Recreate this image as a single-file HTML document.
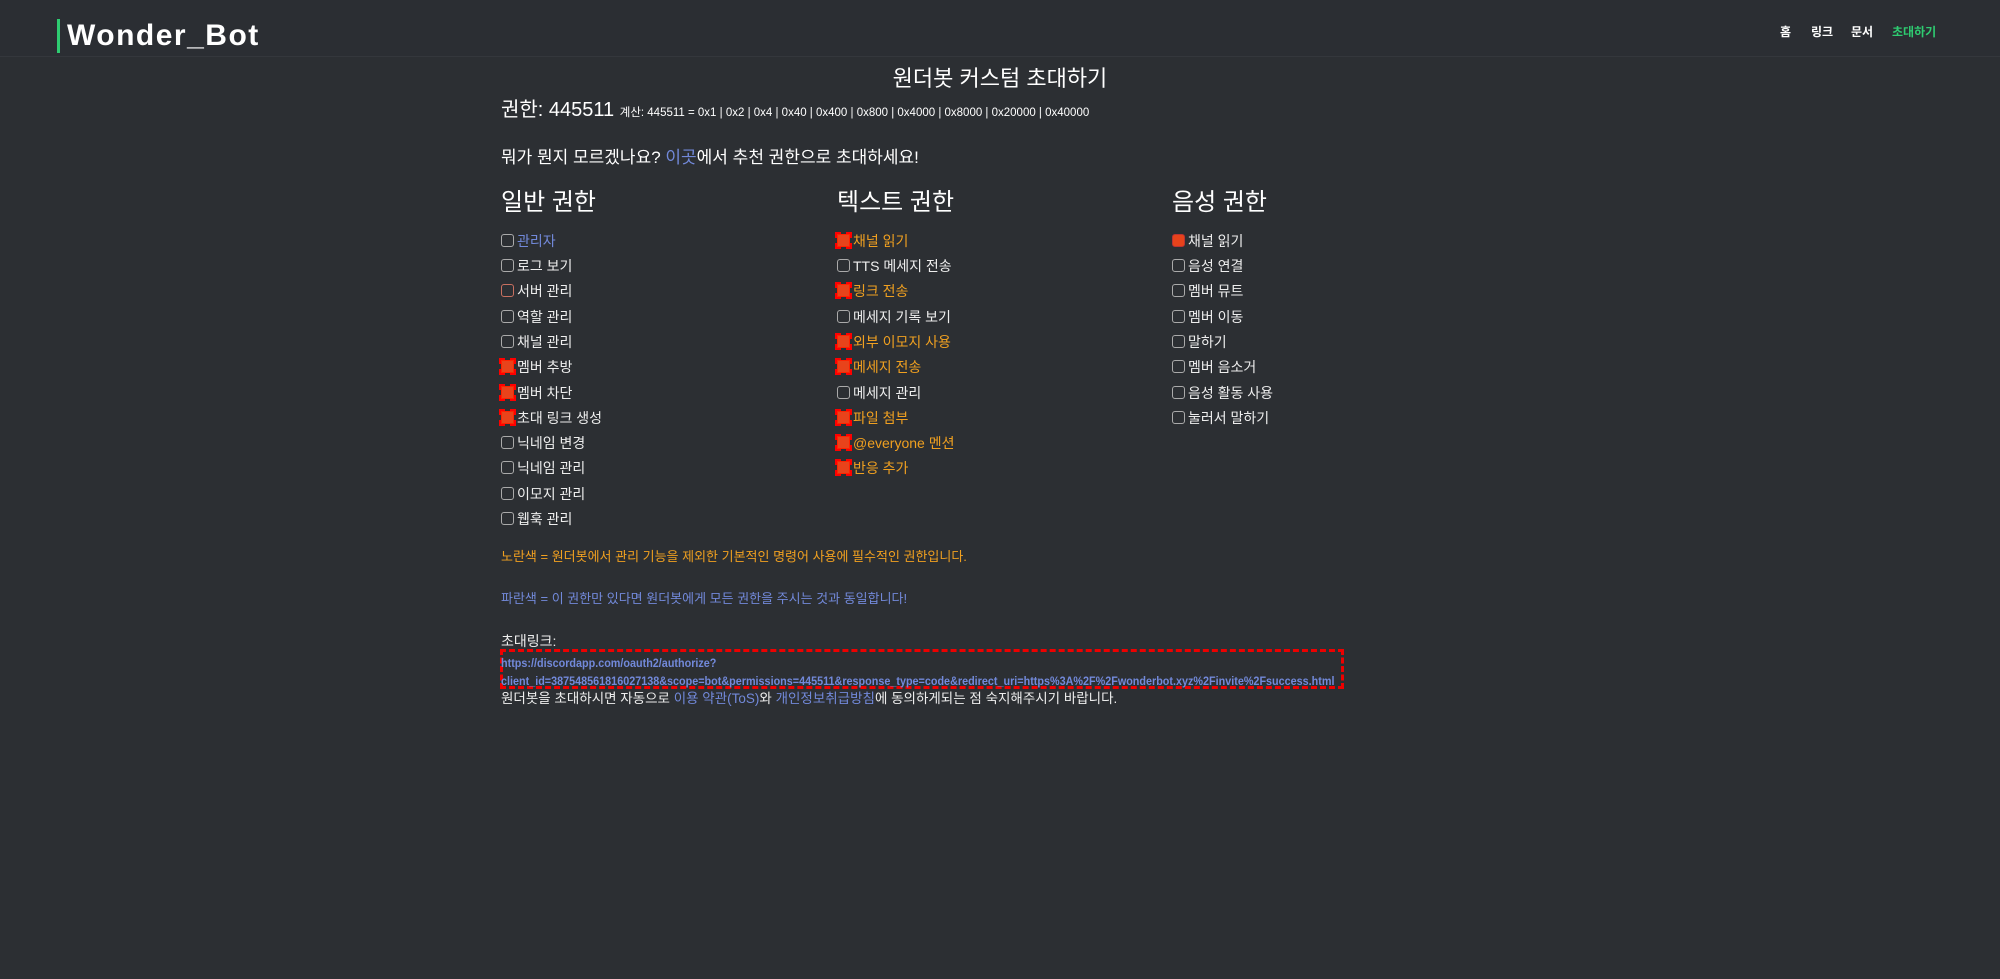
<!DOCTYPE html>
<html><head><meta charset="utf-8"><style>
*{margin:0;padding:0;box-sizing:border-box}
body{width:2000px;height:979px;background:#2c2f33;font-family:"Liberation Sans","Noto Sans CJK KR",sans-serif;color:#fff;position:relative;overflow:hidden}
.hdr{position:absolute;left:0;top:0;width:2000px;height:57px;background:#2b2e33;border-bottom:1px solid #34373c}
.bar{position:absolute;left:57px;top:19px;width:3px;height:34px;background:#2ecc71}
.logo{position:absolute;left:67px;top:18px;font-size:30px;font-weight:bold;letter-spacing:1.5px;line-height:36px}
.nav{position:absolute;top:25px;font-size:12px;font-weight:bold;line-height:14px}
.t{position:absolute;white-space:nowrap}
.cb{position:absolute;width:13px;height:13px;border:1.5px solid #aaa;border-radius:3px}
.on{background:#e8431b;border-color:#ff2200;border-radius:0;outline:2px dashed #f00;outline-offset:0}
.on2{background:#e8431b;border-color:#b33}
.it{position:absolute;font-size:14px;line-height:16px;white-space:nowrap;color:#eee}
.b{color:#7289da !important}.y{color:#f0a020 !important}
</style></head><body>
<div class="hdr"></div>
<div class="bar"></div>
<div class="logo">Wonder_Bot</div>
<div class="nav" style="left:1780px">홈</div>
<div class="nav" style="left:1811px">링크</div>
<div class="nav" style="left:1851px">문서</div>
<div class="nav" style="left:1892px;color:#2ecc71">초대하기</div>

<div class="t" style="left:0;width:2000px;text-align:center;top:66px;font-size:22px;line-height:26px">원더봇 커스텀 초대하기</div>
<div class="t" style="left:501px;top:97px;font-size:20px;line-height:26px">권한: 445511 <span style="font-size:11.5px">계산: 445511 = 0x1 | 0x2 | 0x4 | 0x40 | 0x400 | 0x800 | 0x4000 | 0x8000 | 0x20000 | 0x40000</span></div>
<div class="t" style="left:501px;top:148px;font-size:17px;line-height:20px">뭐가 뭔지 모르겠나요? <span class="b">이곳</span>에서 추천 권한으로 초대하세요!</div>
<div class="t" style="left:501px;top:189px;font-size:24px;line-height:28px">일반 권한</div>
<div class="t" style="left:837px;top:189px;font-size:24px;line-height:28px">텍스트 권한</div>
<div class="t" style="left:1172px;top:189px;font-size:24px;line-height:28px">음성 권한</div>

<div class="cb" style="left:501px;top:234px"></div><div class="it b" style="left:517px;top:233px">관리자</div>
<div class="cb" style="left:501px;top:259px"></div><div class="it" style="left:517px;top:258px">로그 보기</div>
<div class="cb" style="left:501px;top:284px;border-color:#c87060"></div><div class="it" style="left:517px;top:283px">서버 관리</div>
<div class="cb" style="left:501px;top:310px"></div><div class="it" style="left:517px;top:309px">역할 관리</div>
<div class="cb" style="left:501px;top:335px"></div><div class="it" style="left:517px;top:334px">채널 관리</div>
<div class="cb on" style="left:501px;top:360px"></div><div class="it" style="left:517px;top:359px">멤버 추방</div>
<div class="cb on" style="left:501px;top:386px"></div><div class="it" style="left:517px;top:385px">멤버 차단</div>
<div class="cb on" style="left:501px;top:411px"></div><div class="it" style="left:517px;top:410px">초대 링크 생성</div>
<div class="cb" style="left:501px;top:436px"></div><div class="it" style="left:517px;top:435px">닉네임 변경</div>
<div class="cb" style="left:501px;top:461px"></div><div class="it" style="left:517px;top:460px">닉네임 관리</div>
<div class="cb" style="left:501px;top:487px"></div><div class="it" style="left:517px;top:486px">이모지 관리</div>
<div class="cb" style="left:501px;top:512px"></div><div class="it" style="left:517px;top:511px">웹훅 관리</div>

<div class="cb on" style="left:837px;top:234px"></div><div class="it y" style="left:853px;top:233px">채널 읽기</div>
<div class="cb" style="left:837px;top:259px"></div><div class="it" style="left:853px;top:258px">TTS 메세지 전송</div>
<div class="cb on" style="left:837px;top:284px"></div><div class="it y" style="left:853px;top:283px">링크 전송</div>
<div class="cb" style="left:837px;top:310px"></div><div class="it" style="left:853px;top:309px">메세지 기록 보기</div>
<div class="cb on" style="left:837px;top:335px"></div><div class="it y" style="left:853px;top:334px">외부 이모지 사용</div>
<div class="cb on" style="left:837px;top:360px"></div><div class="it y" style="left:853px;top:359px">메세지 전송</div>
<div class="cb" style="left:837px;top:386px"></div><div class="it" style="left:853px;top:385px">메세지 관리</div>
<div class="cb on" style="left:837px;top:411px"></div><div class="it y" style="left:853px;top:410px">파일 첨부</div>
<div class="cb on" style="left:837px;top:436px"></div><div class="it y" style="left:853px;top:435px">@everyone 멘션</div>
<div class="cb on" style="left:837px;top:461px"></div><div class="it y" style="left:853px;top:460px">반응 추가</div>

<div class="cb on2" style="left:1172px;top:234px"></div><div class="it" style="left:1188px;top:233px">채널 읽기</div>
<div class="cb" style="left:1172px;top:259px"></div><div class="it" style="left:1188px;top:258px">음성 연결</div>
<div class="cb" style="left:1172px;top:284px"></div><div class="it" style="left:1188px;top:283px">멤버 뮤트</div>
<div class="cb" style="left:1172px;top:310px"></div><div class="it" style="left:1188px;top:309px">멤버 이동</div>
<div class="cb" style="left:1172px;top:335px"></div><div class="it" style="left:1188px;top:334px">말하기</div>
<div class="cb" style="left:1172px;top:360px"></div><div class="it" style="left:1188px;top:359px">멤버 음소거</div>
<div class="cb" style="left:1172px;top:386px"></div><div class="it" style="left:1188px;top:385px">음성 활동 사용</div>
<div class="cb" style="left:1172px;top:411px"></div><div class="it" style="left:1188px;top:410px">눌러서 말하기</div>

<div class="it y" style="left:501px;top:549px;font-size:13px">노란색 = 원더봇에서 관리 기능을 제외한 기본적인 명령어 사용에 필수적인 권한입니다.</div>
<div class="it b" style="left:501px;top:591px;font-size:13px">파란색 = 이 권한만 있다면 원더봇에게 모든 권한을 주시는 것과 동일합니다!</div>
<div class="it" style="left:501px;top:633px;font-size:14px">초대링크:</div>
<div style="position:absolute;left:500px;top:649px;width:844px;height:40px;border:3px dashed #e00"></div>
<div class="it b" style="left:501px;top:655px;font-size:12px;font-weight:bold;transform:scaleX(0.9);transform-origin:0 0">https://discordapp.com/oauth2/authorize?</div>
<div class="it b" style="left:501px;top:673px;font-size:12px;font-weight:bold;transform:scaleX(0.9);transform-origin:0 0">client_id=387548561816027138&amp;scope=bot&amp;permissions=445511&amp;response_type=code&amp;redirect_uri=https%3A%2F%2Fwonderbot.xyz%2Finvite%2Fsuccess.html</div>
<div class="it" style="left:501px;top:691px;font-size:13.5px">원더봇을 초대하시면 자동으로 <span class="b">이용 약관(ToS)</span>와 <span class="b">개인정보취급방침</span>에 동의하게되는 점 숙지해주시기 바랍니다.</div>
</body></html>
